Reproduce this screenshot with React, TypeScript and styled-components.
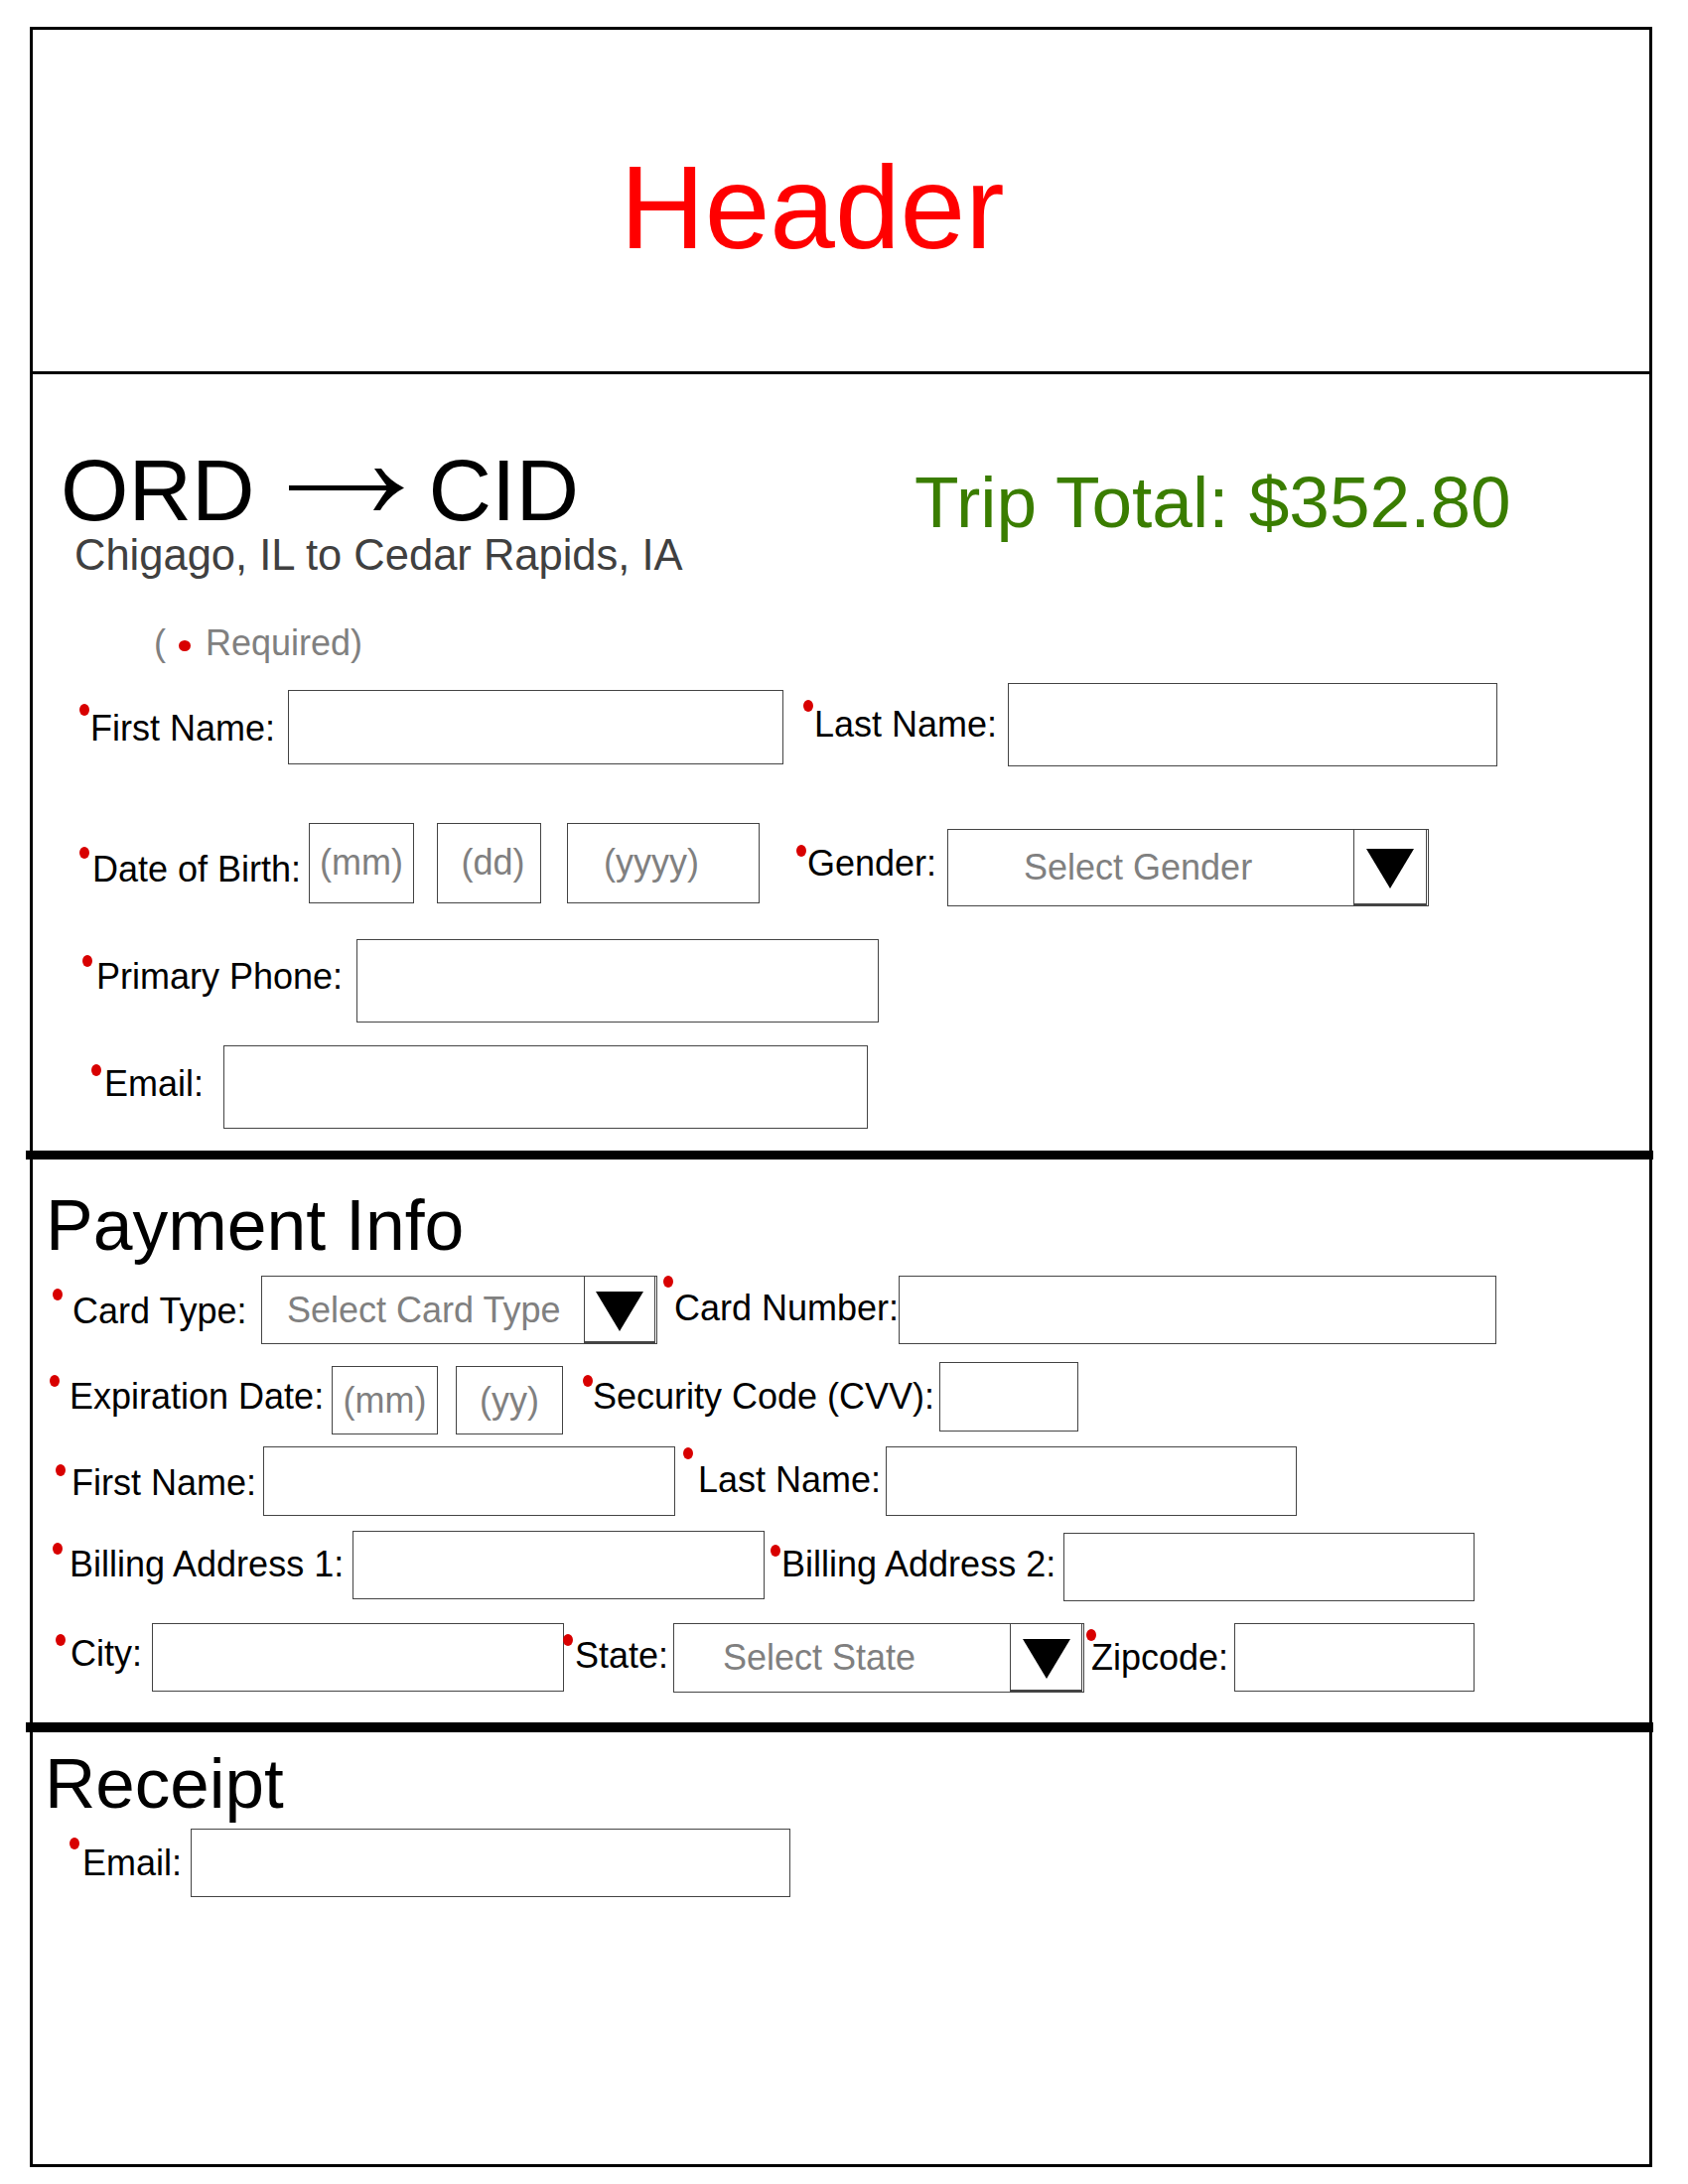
import React from "react";
import styled, { createGlobalStyle } from "styled-components";

const GlobalStyle = createGlobalStyle`
  *, *::before, *::after {
    box-sizing: border-box;
  }
  html, body {
    margin: 0;
    padding: 0;
    background: #fff;
  }
  body {
    font-family: "Liberation Sans", Arial, sans-serif;
    color: #000;
  }
`;

type FieldProps = {
  ml: number;
  mt?: number;
  lw: number;
  tx: number;
  above: number;
  dy?: number;
  label: string;
  children: React.ReactNode;
};

// label with the red "required" dot, then whatever input goes with it
const Field: React.FC<FieldProps> = ({ ml, mt = 0, lw, tx, above, dy = 0, label, children }) => {
  return (
    <SField $ml={ml} $mt={mt}>
      <SLabel $w={lw} $dy={dy}>
        <SDot $above={above} />
        <SLabelText $tx={tx}>{label}</SLabelText>
      </SLabel>
      {children}
    </SField>
  );
};

type SelectProps = { w: number; h: number; btn: number; pad: number; text: string };

const FakeSelect: React.FC<SelectProps> = ({ w, h, btn, pad, text }) => {
  return (
    <SSelect $w={w} $h={h}>
      <SSelectText $pad={pad}>{text}</SSelectText>
      <SSelectButton $w={btn}>
        <svg width="48" height="40" viewBox="0 0 48 40">
          <polygon points="0,0 48,0 24,40" fill="#000" />
        </svg>
      </SSelectButton>
    </SSelect>
  );
};

const RouteArrow = () => (
  <SArrow width="116" height="44" viewBox="0 0 116 44">
    <rect x="0" y="17" width="108" height="5" fill="#000" />
    <path d="M86 0 L93 0 Q101 12 116 19.5 Q101 27 92 42 L85 42 Q93 29 100 19.5 Q93 10 86 0 Z" fill="#000" />
  </SArrow>
);

const App: React.FC = () => {
  return (
    <SPage>
      <GlobalStyle />
      <SFrame>
        <SHeader>
          <SHeaderTitle>Header</SHeaderTitle>
        </SHeader>

        <STripSection>
          <STopBar>
            <SRouteBlock>
              <SRouteTitle>
                <span>ORD</span>
                <RouteArrow />
                <span>CID</span>
              </SRouteTitle>
              <SRouteSub>Chigago, IL to Cedar Rapids, IA</SRouteSub>
            </SRouteBlock>
            <STripTotal>Trip Total: $352.80</STripTotal>
          </STopBar>

          <SRequired>
            <span>(</span>
            <SRequiredDot />
            <span>Required)</span>
          </SRequired>

          <SRow $mt={22}>
            <Field ml={47} mt={7} lw={210} tx={1} above={12} dy={2} label="First Name:">
              <SInput $w={499} $h={75} />
            </Field>
            <Field ml={20} lw={206} tx={1} above={11} label="Last Name:">
              <SInput $w={493} $h={84} />
            </Field>
          </SRow>

          <SRow $mt={57}>
            <Field ml={47} lw={231} tx={3} above={10} dy={7} label="Date of Birth:">
              <SInput $w={106} $h={81} placeholder="(mm)" />
              <SInput $w={105} $h={81} $ml={23} $pl={8} placeholder="(dd)" />
              <SInput $w={194} $h={81} $ml={26} $pr={24} placeholder="(yyyy)" />
            </Field>
            <Field ml={37} mt={6} lw={152} tx={1} above={6} dy={-3.5} label="Gender:">
              <FakeSelect w={485} h={78} btn={74} pad={76} text="Select Gender" />
            </Field>
          </SRow>

          <SRow $mt={33}>
            <Field ml={50} lw={276} tx={4} above={9} dy={-3.5} label="Primary Phone:">
              <SInput $w={526} $h={84} />
            </Field>
          </SRow>

          <SRow $mt={23}>
            <Field ml={59} lw={133} tx={3} above={7} dy={-2.5} label="Email:">
              <SInput $w={649} $h={84} />
            </Field>
          </SRow>
        </STripSection>

        <SDivider $h={9} $mt={22} />

        <SSection>
          <SSectionTitle $mt={31} $ml={13} $size={71.5}>
            Payment Info
          </SSectionTitle>

          <SRow $mt={15}>
            <Field ml={20} lw={210} tx={10} above={9} dy={1} label="Card Type:">
              <FakeSelect w={399} h={69} btn={72} pad={25} text="Select Card Type" />
            </Field>
            <Field ml={6} lw={237} tx={1} above={19} dy={-2} label="Card Number:">
              <SInput $w={602} $h={69} />
            </Field>
          </SRow>

          <SRow $mt={18}>
            <Field ml={17} mt={4} lw={284} tx={10} above={8} dy={-4} label="Expiration Date:">
              <SInput $w={107} $h={69} placeholder="(mm)" />
              <SInput $w={108} $h={69} $ml={18} placeholder="(yy)" />
            </Field>
            <Field ml={20} lw={359} tx={0} above={9} label="Security Code (CVV):">
              <SInput $w={140} $h={70} />
            </Field>
          </SRow>

          <SRow $mt={12}>
            <Field ml={23} lw={209} tx={6} above={5} dy={1.5} label="First Name:">
              <SInput $w={415} $h={70} />
            </Field>
            <Field ml={8} lw={204} tx={5} above={19} dy={-1.5} label="Last Name:">
              <SInput $w={414} $h={70} />
            </Field>
          </SRow>

          <SRow $mt={15}>
            <Field ml={20} lw={302} tx={7} above={8} dy={-1} label="Billing Address 1:">
              <SInput $w={415} $h={69} />
            </Field>
            <Field ml={6} mt={2} lw={295} tx={1} above={6} dy={-3} label="Billing Address 2:">
              <SInput $w={414} $h={69} />
            </Field>
          </SRow>

          <SRow $mt={22}>
            <Field ml={23} lw={97} tx={5} above={6} dy={-4} label="City:">
              <SInput $w={415} $h={69} />
            </Field>
            <Field ml={-1} lw={111} tx={2} above={9} dy={-2} label="State:">
              <FakeSelect w={414} h={70} btn={73} pad={49} text="Select State" />
            </Field>
            <Field ml={2} lw={149} tx={-5} above={15} label="Zipcode:">
              <SInput $w={242} $h={69} />
            </Field>
          </SRow>
        </SSection>

        <SDivider $h={10} $mt={30} />

        <SReceiptSection>
          <SSectionTitle $mt={16} $ml={12} $size={71}>
            Receipt
          </SSectionTitle>
          <SRow $mt={10}>
            <Field ml={37} lw={122} tx={3} above={12} label="Email:">
              <SInput $w={604} $h={69} />
            </Field>
          </SRow>
        </SReceiptSection>
      </SFrame>
    </SPage>
  );
};

export default App;

const SPage = styled.div`
  padding: 27px 0 0 30px;
`;

const SFrame = styled.div`
  width: 1634px;
  height: 2156px;
  border: 3px solid #000;
  display: flex;
  flex-direction: column;
`;

const SHeader = styled.header`
  height: 347px;
  flex-shrink: 0;
  border-bottom: 3px solid #000;
  display: flex;
  justify-content: center;
  align-items: flex-start;
  padding: 120px 58px 0 0;
`;

const SHeaderTitle = styled.h1`
  margin: 0;
  font-size: 118px;
  font-weight: 400;
  line-height: 1;
  color: #ff0000;
`;

const STripSection = styled.section`
  padding-top: 73px;
`;

const STopBar = styled.div`
  display: flex;
  align-items: flex-start;
`;

const SRouteBlock = styled.div`
  width: 860px;
  margin-left: 28px;
`;

const SRouteTitle = styled.div`
  display: flex;
  align-items: center;
  font-size: 88px;
  line-height: 1;
`;

const SArrow = styled.svg`
  flex-shrink: 0;
  margin: 0 25px 0 34px;
`;

const SRouteSub = styled.div`
  margin-left: 14px;
  font-size: 43.5px;
  line-height: 1;
  color: #404040;
`;

const STripTotal = styled.div`
  margin-top: 19px;
  font-size: 73px;
  line-height: 1;
  color: #3a7d00;
`;

const SRequired = styled.div`
  display: flex;
  align-items: center;
  margin: 48px 0 0 122px;
  font-size: 36px;
  line-height: 1;
  color: #808080;
`;

const SRequiredDot = styled.span`
  width: 12px;
  height: 11px;
  margin: 5px 15px 0 13px;
  border-radius: 50%;
  background: #d80000;
`;

const SRow = styled.div<{ $mt: number }>`
  display: flex;
  align-items: flex-start;
  margin-top: ${(props) => props.$mt}px;
`;

const SField = styled.div<{ $ml: number; $mt: number }>`
  display: flex;
  align-items: center;
  margin-left: ${(props) => props.$ml}px;
  margin-top: ${(props) => props.$mt}px;
`;

const SLabel = styled.label<{ $w: number; $dy: number }>`
  display: flex;
  align-items: flex-start;
  flex-shrink: 0;
  width: ${(props) => props.$w}px;
  margin-top: ${(props) => (props.$dy > 0 ? props.$dy * 2 : 0)}px;
  margin-bottom: ${(props) => (props.$dy < 0 ? -props.$dy * 2 : 0)}px;
  font-size: 36px;
  line-height: 1;
  white-space: nowrap;
`;

const SDot = styled.span<{ $above: number }>`
  flex-shrink: 0;
  width: 10px;
  height: 12px;
  margin-top: ${(props) => 4.7 - props.$above}px;
  border-radius: 50%;
  background: #d80000;
`;

const SLabelText = styled.span<{ $tx: number }>`
  margin-left: ${(props) => props.$tx}px;
`;

const SInput = styled.input<{ $w: number; $h: number; $ml?: number; $pl?: number; $pr?: number }>`
  flex-shrink: 0;
  width: ${(props) => props.$w}px;
  height: ${(props) => props.$h}px;
  margin: 0 0 0 ${(props) => props.$ml || 0}px;
  padding: 0 ${(props) => props.$pr || 0}px 0 ${(props) => props.$pl || 0}px;
  border: 1px solid #444;
  border-radius: 0;
  background: #fff;
  font-family: "Liberation Sans", Arial, sans-serif;
  font-size: 36px;
  text-align: center;
  outline: none;
  &::placeholder {
    color: #808080;
    opacity: 1;
  }
`;

const SSelect = styled.div<{ $w: number; $h: number }>`
  display: flex;
  flex-shrink: 0;
  width: ${(props) => props.$w}px;
  height: ${(props) => props.$h}px;
  border: 1px solid #444;
  background: #fff;
`;

const SSelectText = styled.div<{ $pad: number }>`
  flex: 1;
  display: flex;
  align-items: center;
  padding-left: ${(props) => props.$pad}px;
  font-size: 36px;
  line-height: 1;
  color: #808080;
  white-space: nowrap;
`;

const SSelectButton = styled.div<{ $w: number }>`
  display: flex;
  align-items: center;
  justify-content: center;
  width: ${(props) => props.$w}px;
  margin-right: 1px;
  padding-top: 4px;
  border-left: 1px solid #444;
  border-right: 1px solid #444;
  border-bottom: 2px solid #444;
`;

const SDivider = styled.div<{ $h: number; $mt: number }>`
  flex-shrink: 0;
  height: ${(props) => props.$h}px;
  margin: ${(props) => props.$mt}px -4px 0 -7px;
  background: #000;
`;

const SSection = styled.section``;

const SReceiptSection = styled.section`
  flex: 1;
`;

const SSectionTitle = styled.h2<{ $mt: number; $ml: number; $size: number }>`
  margin: ${(props) => props.$mt}px 0 0 ${(props) => props.$ml}px;
  font-size: ${(props) => props.$size}px;
  font-weight: 400;
  line-height: 1;
`;
